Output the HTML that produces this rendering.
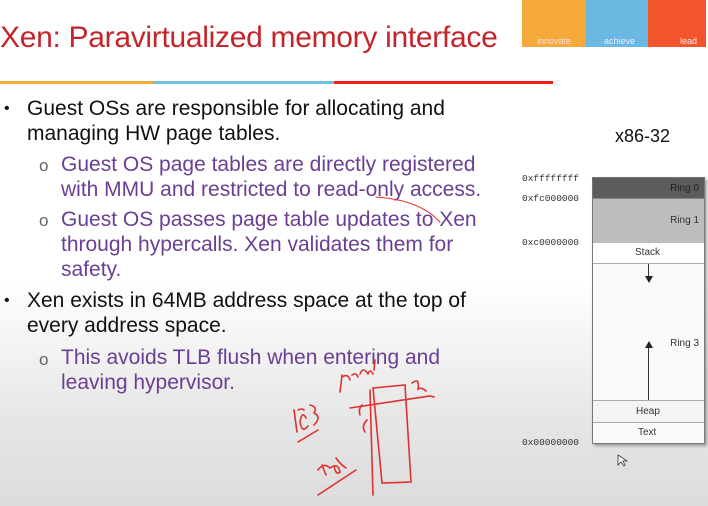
<!DOCTYPE html><html><head><style>
body{margin:0;width:708px;height:506px;overflow:hidden;font-family:"Liberation Sans",sans-serif;background:linear-gradient(#fff 0,#fff 280px,#e6e6e6 420px,#dcdcdc 506px);position:relative}
.a{position:absolute;white-space:nowrap}
.m{font-size:21px;color:#111;left:27px}
.s{font-size:21px;color:#6a3f93;left:61px}
.b{left:4px;font-size:16px;color:#111}
.o{left:39px;font-size:17px;color:#666}
.h{font-family:"Liberation Mono",monospace;font-size:9.5px;color:#333;left:522px}
.lab{position:absolute;font-size:10px;color:#333}
</style></head><body>
<div class="a" style="left:0;top:21px;font-size:30px;color:#c4242a;letter-spacing:-0.3px">Xen: Paravirtualized memory interface</div>
<div class="a" style="left:522px;top:0;width:64px;height:47px;background:#f5a93a"></div>
<div class="a" style="left:586px;top:0;width:62px;height:47px;background:#6bb8e2"></div>
<div class="a" style="left:648px;top:0;width:58px;height:47px;background:#f2542c"></div>
<div class="a" style="left:537px;top:36px;font-size:9px;color:#fde">innovate</div>
<div class="a" style="left:604px;top:36px;font-size:9px;color:#eef">achieve</div>
<div class="a" style="left:680px;top:36px;font-size:9px;color:#fee">lead</div>
<div class="a" style="left:0;top:81px;width:153px;height:3px;background:#f5ad3a"></div>
<div class="a" style="left:153px;top:81px;width:181px;height:3px;background:#72bfe2"></div>
<div class="a" style="left:334px;top:81px;width:219px;height:3px;background:#f21c1c"></div>

<div class="a b" style="top:100px">•</div>
<div class="a m" style="top:97px">Guest OSs are responsible for allocating and</div>
<div class="a m" style="top:122px">managing HW page tables.</div>
<div class="a o" style="top:156px">o</div>
<div class="a s" style="top:153px">Guest OS page tables are directly registered</div>
<div class="a s" style="top:178px">with MMU and restricted to read-only access.</div>
<div class="a o" style="top:211px">o</div>
<div class="a s" style="top:208px">Guest OS passes page table updates to Xen</div>
<div class="a s" style="top:233px">through hypercalls. Xen validates them for</div>
<div class="a s" style="top:258px">safety.</div>
<div class="a b" style="top:292px">•</div>
<div class="a m" style="top:289px">Xen exists in 64MB address space at the top of</div>
<div class="a m" style="top:314px">every address space.</div>
<div class="a o" style="top:350px">o</div>
<div class="a s" style="top:346px">This avoids TLB flush when entering and</div>
<div class="a s" style="top:371px">leaving hypervisor.</div>

<div class="a" style="left:615px;top:126px;font-size:18px;color:#111">x86-32</div>
<div class="a h" style="top:173px">0xffffffff</div>
<div class="a h" style="top:193px">0xfc000000</div>
<div class="a h" style="top:237px">0xc0000000</div>
<div class="a h" style="top:437px">0x00000000</div>
<div class="a" style="left:592px;top:177px;width:111px;height:265px;border:1px solid #777;background:#fafafa;box-shadow:2px 2px 3px #999">
<div style="position:absolute;left:0;top:0;width:111px;height:20px;background:#5c5c5c"></div>
<div class="lab" style="right:5px;top:5px;color:#222">Ring 0</div>
<div style="position:absolute;left:0;top:20px;width:111px;height:44px;background:#bdbdbd;border-top:1px solid #888"></div>
<div class="lab" style="right:5px;top:37px">Ring 1</div>
<div style="position:absolute;left:0;top:65px;width:111px;height:20px;border-bottom:1px solid #aaa;background:#fff"></div>
<div class="lab" style="left:42px;top:69px">Stack</div>
<div style="position:absolute;left:55px;top:86px;width:1px;height:14px;background:#333"></div>
<div style="position:absolute;left:52px;top:98px;border-left:4px solid transparent;border-right:4px solid transparent;border-top:7px solid #222"></div>
<div class="lab" style="right:5px;top:160px">Ring 3</div>
<div style="position:absolute;left:52px;top:163px;border-left:4px solid transparent;border-right:4px solid transparent;border-bottom:7px solid #222"></div>
<div style="position:absolute;left:55px;top:170px;width:1px;height:52px;background:#333"></div>
<div style="position:absolute;left:0;top:222px;width:111px;height:21px;border-top:1px solid #aaa;border-bottom:1px solid #aaa;background:#f4f4f4"></div>
<div class="lab" style="left:43px;top:228px">Heap</div>
<div class="lab" style="left:45px;top:249px">Text</div>
</div>

<svg class="a" style="left:0;top:0" width="708" height="506" fill="none" stroke="#e03030" stroke-width="1.6" stroke-linecap="round">
<path d="M376 197 Q420 200 440 222" stroke-width="1"/>
<path d="M373 388 L405 385 L411 482 L382 483 Z"/>
<path d="M370 390 L373 495"/>
<path d="M350 408 L430 396 L434 397"/>
<path d="M340 392 L342 375 M342 377 Q348 373 350 380 M352 375 q4 -3 6 2 M360 374 q3 -8 8 0 M368 374 q2 -6 5 0 M374 370 l1 -10"/>
<path d="M412 383 q8 -6 6 6 q4 -2 8 2"/>
<path d="M294 410 L297 432 M298 410 q4 -2 6 0 M306 418 q-4 -8 -6 4 q2 12 8 4 M310 405 q8 2 4 8 q8 4 0 12 M298 442 L318 430"/>
<path d="M318 470 q6 -8 12 -2 q8 -6 10 4 q-4 4 -6 -6 M322 465 l4 10 M336 458 q4 6 10 10"/>
<path d="M318 495 L356 470"/>
<path d="M362 405 q-4 4 -2 10 M367 420 q-6 6 -2 12"/>
</svg>
<svg class="a" style="left:617px;top:454px" width="12" height="14"><path d="M1 1 L1 11 L4 8 L7 12 L8 11 L6 7 L10 7 Z" fill="#fff" stroke="#333" stroke-width="0.8"/></svg>
</body></html>
